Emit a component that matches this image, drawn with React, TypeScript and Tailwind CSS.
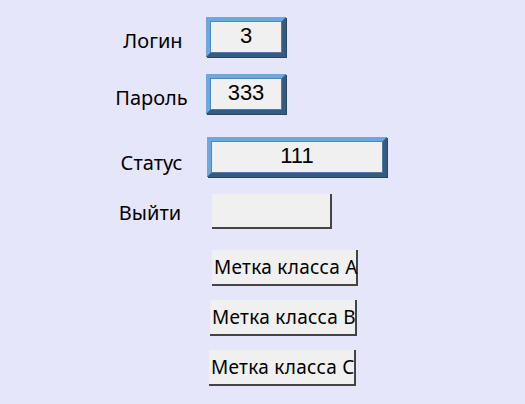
import React from "react";

const labelFont = { fontFamily: '"Noto Sans", "Open Sans", sans-serif' };

function Bevel({ w, h, text }: { w: string; h: string; text: string }) {
  return (
    <div
      className={`${w} ${h} box-border flex items-center justify-center pb-[2px] bg-[#f0f0f0] border-[4px] border-t-[#6da7df] border-l-[#6da7df] border-b-[#375a7f] border-r-[#375a7f] shadow-[inset_1px_1px_0_#4f86bd,inset_-1px_-1px_0_#4d7aa8,1px_1px_0_#2a4562] text-[22px] leading-none text-black font-['Liberation_Sans',Arial,sans-serif]`}
    >
      {text}
    </div>
  );
}

function FlatBtn({ w, h, children, extra }: { w: string; h: string; children?: React.ReactNode; extra?: string }) {
  return (
    <div
      className={`${w} ${h} ${extra ?? ""} box-border flex items-center bg-[#f0f0f0] border-r-2 border-b-2 border-r-[#444444] border-b-[#444444] whitespace-nowrap text-[19px] tracking-[0.3px] text-black pl-[2px]`}
      style={labelFont}
    >
      {children}
    </div>
  );
}

export default function App() {
  return (
    <div className="w-[525px] h-[404px] bg-[#e6e6fa] overflow-hidden flex flex-col pt-[17px]" style={labelFont}>
      {/* Login */}
      <div className="flex items-start pl-[100px]">
        <div className="w-[106px] text-center text-[20px] leading-[24px] mt-[12px] text-black">Логин</div>
        <Bevel w="w-[80px]" h="h-[40px]" text="3" />
      </div>
      {/* Password */}
      <div className="flex items-start pl-[100px] mt-[17px]">
        <div className="w-[106px] text-center text-[20px] leading-[24px] mt-[12px] pr-[3px] text-black">Пароль</div>
        <Bevel w="w-[80px]" h="h-[40px]" text="333" />
      </div>
      {/* Status */}
      <div className="flex items-start pl-[100px] mt-[23px]">
        <div className="w-[107px] text-center text-[20px] leading-[24px] mt-[14px] pr-[4px] text-black">Статус</div>
        <Bevel w="w-[180px]" h="h-[40px]" text="111" />
      </div>
      {/* Exit */}
      <div className="flex items-start pl-[100px] mt-[17px]">
        <div className="w-[112px] text-center text-[20px] leading-[24px] mt-[7px] pr-[12px] text-black">Выйти</div>
        <FlatBtn w="w-[120px]" h="h-[35px]" />
      </div>
      {/* Labels */}
      <div className="flex flex-col pl-[209px] mt-[21px]">
        <FlatBtn w="w-[146px]" h="h-[36px]" extra="ml-[3px]">Метка класса A</FlatBtn>
        <FlatBtn w="w-[147px]" h="h-[36px]" extra="ml-[1px] mt-[14px]">Метка класса B</FlatBtn>
        <FlatBtn w="w-[147px]" h="h-[36px]" extra="mt-[14px]">Метка класса C</FlatBtn>
      </div>
    </div>
  );
}
